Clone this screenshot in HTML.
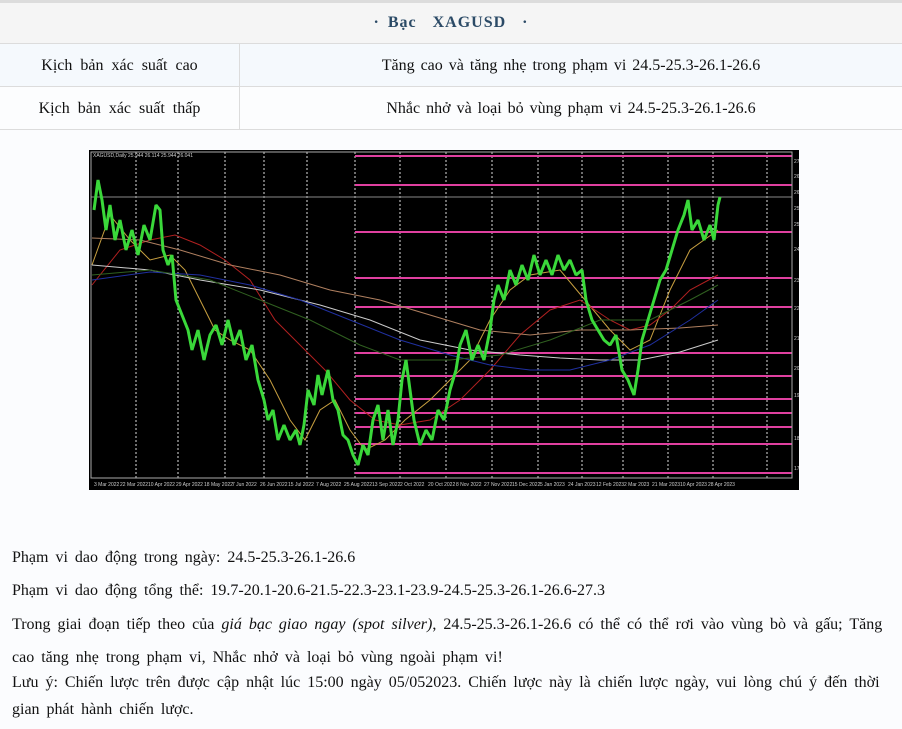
<!DOCTYPE html>
<html><head><meta charset="utf-8"><style>
*{margin:0;padding:0;box-sizing:border-box}
body{width:902px;height:729px;overflow:hidden;background:#fbfcfe;font-family:"Liberation Serif",serif;color:#111;position:relative}
.top{position:absolute;left:0;top:0;width:902px;height:3px;background:#dcdcdc}
.title{position:absolute;left:0;top:3px;width:902px;height:41px;background:#f5f5f5;border-bottom:1px solid #dcdcdc;text-align:center;line-height:40px;font-size:16px;font-weight:bold;color:#2b4a66;letter-spacing:1px;word-spacing:3px}
.row{position:absolute;left:0;width:902px;height:43px;border-bottom:1px solid #dcdcdc;font-size:16px;line-height:43px}
.row .a{position:absolute;left:0;width:240px;text-align:center;border-right:1px solid #dcdcdc;height:42px;word-spacing:4px}
.row .b{position:absolute;left:240px;width:662px;text-align:center;word-spacing:2px}
.p{position:absolute;left:12px;font-size:16px;white-space:nowrap;word-spacing:3px}
</style></head><body>
<div class="top"></div>
<div class="title">· Bạc &nbsp;XAGUSD &nbsp;·</div>
<div class="row" style="top:44px;background:#f5f9fd"><div class="a">Kịch bản xác suất cao</div><div class="b">Tăng cao và tăng nhẹ trong phạm vi 24.5-25.3-26.1-26.6</div></div>
<div class="row" style="top:87px;background:#fcfdfe"><div class="a">Kịch bản xác suất thấp</div><div class="b">Nhắc nhở và loại bỏ vùng phạm vi 24.5-25.3-26.1-26.6</div></div>

<svg style="position:absolute;left:89px;top:150px" width="710" height="340" viewBox="89 150 710 340">
<rect x="89" y="150" width="710" height="340" fill="#000"/>
<g stroke="#ddd" stroke-width="1" stroke-dasharray="2,2">
<line x1="136" y1="152" x2="136" y2="478"/><line x1="178" y1="152" x2="178" y2="478"/><line x1="225" y1="152" x2="225" y2="478"/><line x1="264" y1="152" x2="264" y2="478"/><line x1="307" y1="152" x2="307" y2="478"/><line x1="355" y1="152" x2="355" y2="478"/><line x1="400" y1="152" x2="400" y2="478"/><line x1="446" y1="152" x2="446" y2="478"/><line x1="492" y1="152" x2="492" y2="478"/><line x1="538" y1="152" x2="538" y2="478"/><line x1="582" y1="152" x2="582" y2="478"/><line x1="623" y1="152" x2="623" y2="478"/><line x1="668" y1="152" x2="668" y2="478"/><line x1="713" y1="152" x2="713" y2="478"/><line x1="767" y1="152" x2="767" y2="478"/>
</g>
<line x1="91" y1="197" x2="792" y2="197" stroke="#888"/>
<g stroke="#e040a0" stroke-width="2">
<line x1="355" y1="156" x2="792" y2="156"/><line x1="355" y1="185" x2="792" y2="185"/><line x1="355" y1="232" x2="792" y2="232"/><line x1="355" y1="278" x2="792" y2="278"/><line x1="355" y1="307" x2="792" y2="307"/><line x1="355" y1="353" x2="792" y2="353"/><line x1="355" y1="376" x2="792" y2="376"/><line x1="355" y1="399" x2="792" y2="399"/><line x1="355" y1="413" x2="792" y2="413"/><line x1="355" y1="427" x2="792" y2="427"/><line x1="355" y1="444" x2="792" y2="444"/><line x1="355" y1="473" x2="792" y2="473"/>
</g>
<rect x="91" y="152" width="701" height="326" fill="none" stroke="#aaa"/>
<g fill="none" stroke-width="1">
<polyline stroke="#c8a040" points="92,265 110,215 130,240 150,260 170,255 185,270 200,300 215,330 230,340 250,350 270,380 290,420 305,440 320,410 335,400 350,430 365,450 385,440 405,420 430,400 450,380 470,360 490,320 510,290 530,275 560,270 585,300 610,330 630,350 650,340 670,290 690,250 718,230"/>
<polyline stroke="#b02020" points="92,285 120,250 150,240 175,235 200,245 225,260 250,280 275,320 300,345 325,370 350,400 375,420 400,425 430,420 460,400 490,370 520,335 550,310 580,300 610,320 630,330 650,325 670,310 690,290 718,275"/>
<polyline stroke="#b08060" points="92,238 140,240 180,250 230,265 280,275 330,290 380,300 430,315 480,330 530,335 580,330 630,330 680,328 718,325"/>
<polyline stroke="#cccccc" points="92,265 150,270 200,280 260,290 320,305 370,320 420,340 470,350 520,355 560,358 600,360 640,360 680,352 718,340"/>
<polyline stroke="#2030a0" points="92,280 150,272 200,275 250,285 300,300 350,320 400,340 450,355 490,365 530,370 570,370 610,360 650,345 690,320 718,300"/>
<polyline stroke="#306020" points="92,275 150,270 210,280 260,300 310,320 360,345 400,360 450,360 500,355 550,340 600,320 650,320 690,300 718,285"/>
</g>
<polyline fill="none" stroke="#3ad83a" stroke-width="3" stroke-linejoin="bevel" points="94,210 98,180 102,200 106,230 110,205 115,240 120,220 126,250 132,230 138,255 144,225 150,240 156,205 160,210 163,250 168,265 172,255 176,300 182,315 188,330 192,350 198,330 204,360 210,335 216,325 222,345 228,320 234,345 240,330 246,360 252,345 258,380 264,400 268,420 273,410 278,440 284,425 290,440 296,430 300,445 304,425 308,390 314,405 318,375 322,395 328,370 333,400 338,410 343,435 348,440 353,455 358,465 363,445 368,455 373,420 378,405 383,440 388,410 393,445 398,420 402,380 406,360 410,390 414,420 420,445 426,430 432,440 438,410 444,420 450,390 456,370 460,345 466,330 472,360 478,345 484,360 490,330 494,300 498,285 504,300 510,270 516,285 522,265 528,280 534,255 540,275 546,260 552,275 558,255 564,270 570,260 576,275 582,270 586,300 592,320 598,330 604,340 610,345 616,335 622,370 628,380 634,395 638,370 642,340 648,320 654,300 660,280 666,270 672,250 678,230 684,215 688,200 692,230 698,220 704,240 710,225 714,240 718,205 720,197"/>
<text x="93" y="157" fill="#ccc" font-size="5" font-family="Liberation Sans,sans-serif">XAGUSD,Daily 25.944 26.114 25.944 26.041</text>
<g fill="#ccc" font-size="5" font-family="Liberation Sans,sans-serif">
<text x="94" y="486">3 Mar 2022</text><text x="120" y="486">22 Mar 2022</text><text x="148" y="486">10 Apr 2022</text><text x="176" y="486">29 Apr 2022</text><text x="204" y="486">18 May 2022</text><text x="232" y="486">7 Jun 2022</text><text x="260" y="486">26 Jun 2022</text><text x="288" y="486">15 Jul 2022</text><text x="316" y="486">7 Aug 2022</text><text x="344" y="486">25 Aug 2022</text><text x="372" y="486">13 Sep 2022</text><text x="400" y="486">2 Oct 2022</text><text x="428" y="486">20 Oct 2022</text><text x="456" y="486">8 Nov 2022</text><text x="484" y="486">27 Nov 2022</text><text x="512" y="486">15 Dec 2022</text><text x="540" y="486">5 Jan 2023</text><text x="568" y="486">24 Jan 2023</text><text x="596" y="486">12 Feb 2023</text><text x="624" y="486">2 Mar 2023</text><text x="652" y="486">21 Mar 2023</text><text x="680" y="486">10 Apr 2023</text><text x="708" y="486">28 Apr 2023</text>
<text x="794" y="163">27.866</text><text x="794" y="178">26.650</text><text x="794" y="194">26.210</text><text x="794" y="210">25.768</text><text x="794" y="226">25.328</text><text x="794" y="251">24.436</text><text x="794" y="282">23.545</text><text x="794" y="310">22.664</text><text x="794" y="340">21.770</text><text x="794" y="370">20.889</text><text x="794" y="397">19.996</text><text x="794" y="440">18.668</text><text x="794" y="470">17.786</text>
</g>
</svg>

<div class="p" style="top:549px">Phạm vi dao động trong ngày: 24.5-25.3-26.1-26.6</div>
<div class="p" style="top:582px">Phạm vi dao động tổng thể: 19.7-20.1-20.6-21.5-22.3-23.1-23.9-24.5-25.3-26.1-26.6-27.3</div>
<div class="p" style="top:616px">Trong giai đoạn tiếp theo của <i>giá bạc giao ngay (spot silver)</i>, 24.5-25.3-26.1-26.6 có thể có thể rơi vào vùng bò và gấu; Tăng</div>
<div class="p" style="top:649px">cao tăng nhẹ trong phạm vi, Nhắc nhở và loại bỏ vùng ngoài phạm vi!</div>
<div class="p" style="top:674px">Lưu ý: Chiến lược trên được cập nhật lúc 15:00 ngày 05/052023. Chiến lược này là chiến lược ngày, vui lòng chú ý đến thời</div>
<div class="p" style="top:701px">gian phát hành chiến lược.</div>
</body></html>
